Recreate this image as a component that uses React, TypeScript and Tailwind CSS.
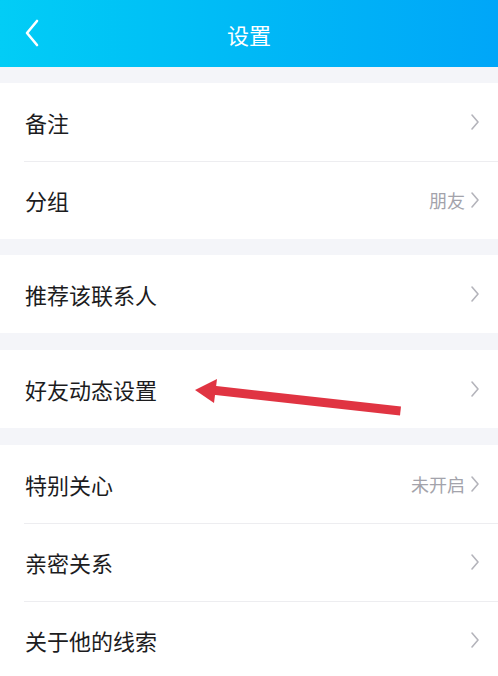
import React from "react";

type Row = { label: string; value?: string };

const groups: Row[][] = [
  [{ label: "备注" }, { label: "分组", value: "朋友" }],
  [{ label: "推荐该联系人" }],
  [{ label: "好友动态设置" }],
  [{ label: "特别关心", value: "未开启" }, { label: "亲密关系" }, { label: "关于他的线索" }],
];

const gapHeights = ["h-[16px]", "h-[16px]", "h-[17px]", "h-[17px]"];

function Chevron() {
  return (
    <svg width="10" height="18" viewBox="0 0 10 18" className="ml-[5px]">
      <path d="M2 2 L8 9 L2 16" fill="none" stroke="#b4b4bb" strokeWidth="1.6" strokeLinecap="round" strokeLinejoin="round" />
    </svg>
  );
}

function SettingRow({ row, first }: { row: Row; first: boolean }) {
  return (
    <div className="relative h-[78px] bg-white flex items-center pl-[25px] pr-[18px]">
      {!first && <div className="absolute top-0 left-[24px] right-0 h-px bg-[#ededf0]" />}
      <span className="flex-1 text-[22px] text-[#1c1c1e] leading-none">{row.label}</span>
      <div className="flex items-center">
        {row.value && <span className="text-[18px] text-[#a3a3ab] leading-none">{row.value}</span>}
        <Chevron />
      </div>
    </div>
  );
}

export default function App() {
  return (
    <div
      className="relative w-[498px] h-[676px] overflow-hidden bg-[#f4f5f9]"
      style={{ fontFamily: '"Noto Sans CJK SC", "Noto Sans", sans-serif' }}
    >
      <header className="relative h-[67px] bg-gradient-to-r from-[#02cdf6] via-[#00b9f6] to-[#00a6f8] flex items-center justify-center">
        <svg width="16" height="28" viewBox="0 0 16 28" className="absolute left-[24px] top-[19px]">
          <path d="M13 2 L3 14 L13 26" fill="none" stroke="#ffffff" strokeWidth="2.6" strokeLinecap="round" strokeLinejoin="round" />
        </svg>
        <h1 className="text-white text-[22px] leading-none">设置</h1>
      </header>

      {groups.map((g, gi) => (
        <div key={gi}>
          <div className={gapHeights[gi]} />
          {g.map((row, ri) => (
            <SettingRow key={row.label} row={row} first={ri === 0} />
          ))}
        </div>
      ))}

      {/* red pointer arrow drawn over the list */}
      <svg className="absolute left-0 top-0 pointer-events-none" width="498" height="676" viewBox="0 0 498 676">
        <path d="M212 385.5 L401 406.5 L400 415.5 L211 394.5 Z" fill="#e03442" />
        <path d="M195 390 L217 379 L214 403 Z" fill="#e03442" />
      </svg>
    </div>
  );
}
